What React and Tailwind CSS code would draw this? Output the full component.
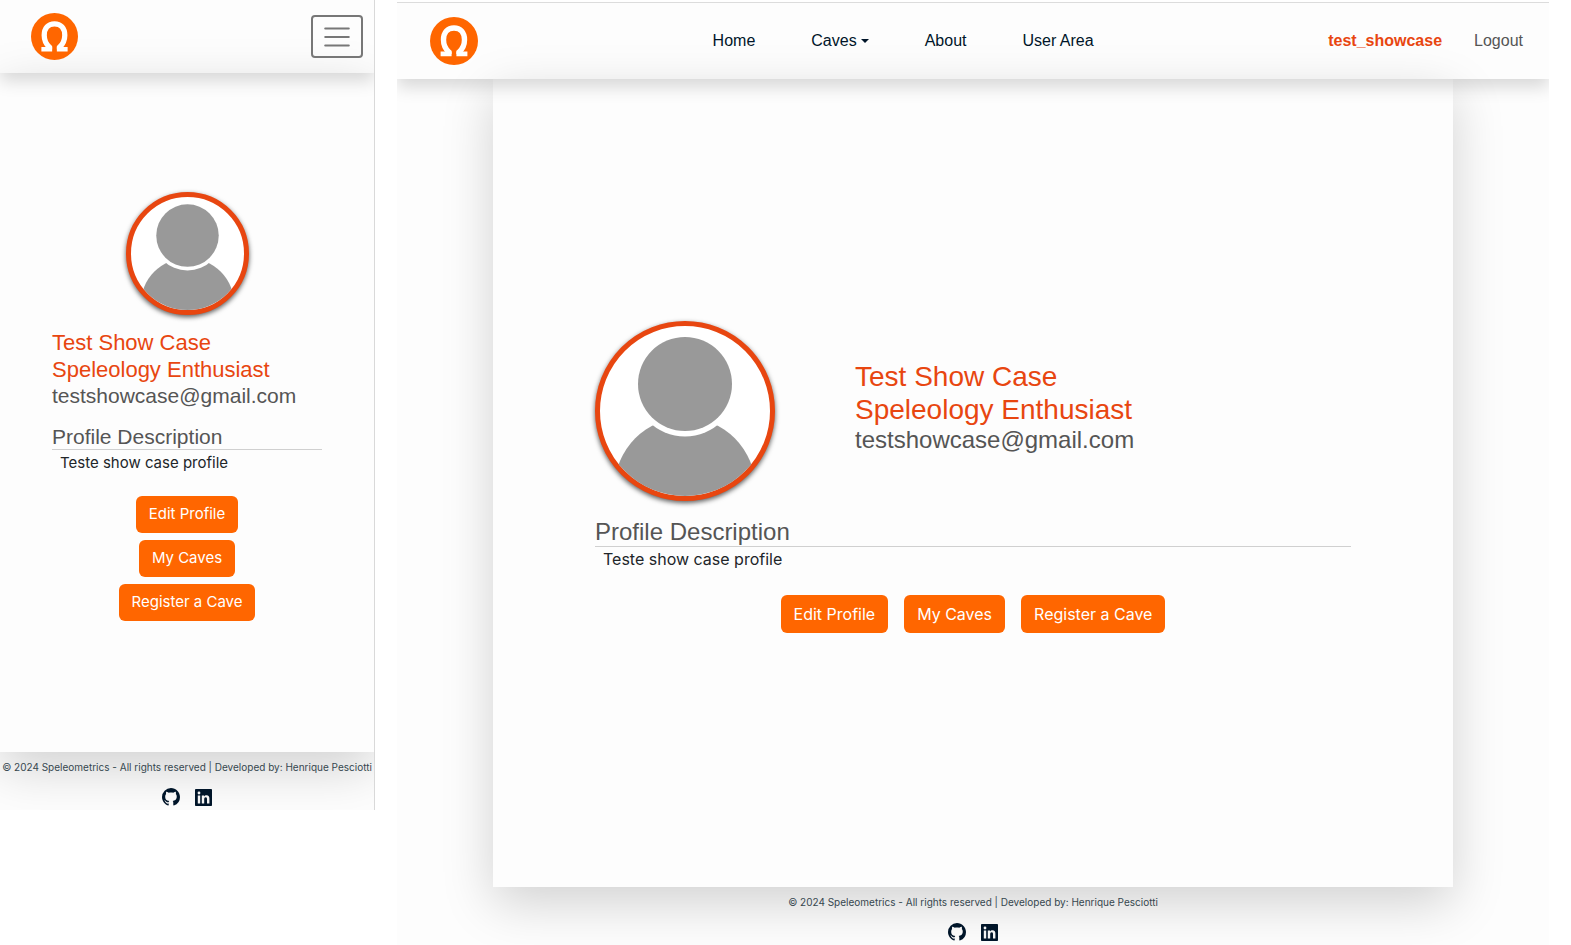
import React from "react";
import { VscGithubInverted } from "react-icons/vsc";

const ARIAL = "font-['Liberation_Sans',Arial,sans-serif]";

function Logo({ className }) {
  return (
    <a href="#home" aria-label="Speleometrics home" className="block shrink-0">
      <svg viewBox="0 0 48 48" className={className} fill="none" aria-hidden="true">
        <circle cx="24" cy="24" r="24" fill="#ff6600" />
        <path
          d="M18.9 37V35C15.4 32 13.5 28 13.5 22.8C13.5 15.4 17.7 11 24 11S34.5 15.4 34.5 22.8C34.5 28 32.6 32 29.1 35V37"
          stroke="#fff"
          strokeWidth="5.4"
        />
        <path d="M10.6 34.6H21.6V39.2H10.6zM26.4 34.6H37.4V39.2H26.4z" fill="#fff" />
      </svg>
    </a>
  );
}

function LinkedinIcon({ className }) {
  return (
    <svg viewBox="0 0 17 17" className={className} fill="none" aria-hidden="true">
      <rect width="17" height="17" rx="0.8" fill="currentColor" />
      <circle cx="4" cy="4" r="1.4" fill="#f5f5f5" />
      <path
        d="M2.8 6.5h2.4v8H2.8zM6.8 6.5h2.3v1.1c.5-.8 1.3-1.3 2.4-1.3 2.2 0 2.9 1.4 2.9 3.5v4.7H12v-4.3c0-1.1-.2-1.9-1.3-1.9S9.2 9.200 9.200 10.200v4.300H6.800z"
        fill="#f5f5f5"
      />
    </svg>
  );
}

function Avatar({ className }) {
  return (
    <div
      className={`shrink-0 overflow-hidden rounded-full border-5 border-[#e84610] bg-white shadow-[0_2px_5px_rgba(0,0,0,0.65)] ${className}`}
    >
      <svg viewBox="0 0 170 170" className="block size-full" role="img" aria-label="Profile picture">
        <circle cx="85" cy="162" r="70.4" fill="#999" />
        <circle cx="85" cy="58" r="52.5" fill="#fff" />
        <circle cx="85" cy="58" r="47" fill="#999" />
      </svg>
    </div>
  );
}

function ActionButton({ className, children }) {
  return (
    <button type="button" className={`rounded-md bg-[#ff6600] px-[13px] text-white ${className}`}>
      {children}
    </button>
  );
}

function Footer() {
  return (
    <footer className="relative flex h-[58px] flex-col items-center">
      <p className="mt-[5px] text-[10px] leading-5 whitespace-nowrap text-[#36474f]">
        © 2024 Speleometrics - All rights reserved | Developed by: Henrique Pesciotti
      </p>
      <div className="mt-[11px] flex items-center gap-[15px] text-[#001529]">
        <a href="#github" aria-label="GitHub">
          <VscGithubInverted className="size-[18px]" />
        </a>
        <a href="#linkedin" aria-label="LinkedIn">
          <LinkedinIcon className="size-[17px]" />
        </a>
      </div>
    </footer>
  );
}

const headerShadow = "shadow-[0_8px_16px_rgba(0,0,0,0.15)]";
const cardShadow = "shadow-[0_16px_48px_rgba(0,0,0,0.175)]";

function MobileView() {
  return (
    <section
      aria-label="Mobile layout"
      className="flex min-h-[810px] w-[375px] shrink-0 flex-col overflow-hidden border-r border-[#d9d9d9] bg-[#fdfdfd]"
    >
      <header className={`relative z-10 flex h-[73px] items-center justify-between pr-[11px] pl-[31px] ${headerShadow}`}>
        <Logo className="size-[47px]" />
        <button
          type="button"
          aria-label="Toggle navigation"
          className="flex h-[43px] w-[52px] items-center justify-center rounded border-2 border-[#777]"
        >
          <svg viewBox="0 0 30 30" className="size-8" stroke="#777" strokeWidth="2" strokeLinecap="round" aria-hidden="true">
            <path d="M4 7h22M4 15h22M4 23h22" />
          </svg>
        </button>
      </header>
      <main className={`flex flex-1 flex-col justify-center bg-[#fdfdfd] px-[52px] pb-3 ${cardShadow}`}>
        <Avatar className="size-[123px] self-center" />
        <div className={`mt-3.5 ${ARIAL}`}>
          <h1 className="text-[22px] leading-[27px] text-[#e84610]">Test Show Case</h1>
          <h2 className="text-[22px] leading-[27px] text-[#e84610]">Speleology Enthusiast</h2>
          <p className="text-[21px] leading-[26px] text-[#555]">testshowcase@gmail.com</p>
        </div>
        <h3 className={`mt-[15px] border-b border-[#d0d0d0] text-[21px] leading-[25px] text-[#555] ${ARIAL}`}>
          Profile Description
        </h3>
        <p className="px-2 text-[15px] leading-[25px] text-[#212529]">Teste show case profile</p>
        <div className="mt-[21px] flex flex-col items-center gap-[7px]">
          <ActionButton className="h-[37px] text-[15px]">Edit Profile</ActionButton>
          <ActionButton className="h-[37px] text-[15px]">My Caves</ActionButton>
          <ActionButton className="h-[37px] text-[15px]">Register a Cave</ActionButton>
        </div>
      </main>
      <Footer />
    </section>
  );
}

function DesktopView() {
  return (
    <section
      aria-label="Desktop layout"
      className="mx-[22px] mt-0.5 flex min-w-0 flex-1 flex-col overflow-hidden border-t border-[#dcdcdc] bg-[#fdfdfd]"
    >
      <header
        className={`relative z-10 flex h-[76px] items-center justify-between pr-[26px] pl-[33px] text-base ${headerShadow} ${ARIAL}`}
      >
        <Logo className="size-12" />
        <nav aria-label="Main" className="flex items-center gap-14 text-[#001529]">
          <a href="#home">Home</a>
          <button type="button" aria-haspopup="menu" className="flex items-center gap-1">
            Caves
            <span className="border-x-4 border-t-4 border-x-transparent border-t-[#001529]" />
          </button>
          <a href="#about">About</a>
          <a href="#user">User Area</a>
        </nav>
        <div className="flex items-center gap-8">
          <a href="#profile" className="font-bold text-[#e84610]">test_showcase</a>
          <a href="#logout" className="text-[#555]">Logout</a>
        </div>
      </header>
      <main className={`mx-auto flex w-5/6 flex-1 flex-col justify-center bg-[#fdfdfd] px-[102px] pb-3 ${cardShadow}`}>
        <div className="flex items-center gap-20">
          <Avatar className="size-[180px]" />
          <div className={`pb-2 ${ARIAL}`}>
            <h1 className="text-[28px] leading-[33px] text-[#e84610]">Test Show Case</h1>
            <h2 className="text-[28px] leading-[33px] text-[#e84610]">Speleology Enthusiast</h2>
            <p className="text-2xl leading-7 text-[#555]">testshowcase@gmail.com</p>
          </div>
        </div>
        <h3 className={`mt-4 border-b border-[#d0d0d0] text-2xl leading-[29px] text-[#555] ${ARIAL}`}>
          Profile Description
        </h3>
        <p className="px-2 text-base leading-6 text-[#212529]">Teste show case profile</p>
        <div className="mt-6 flex justify-center gap-4">
          <ActionButton className="h-[38px] text-base">Edit Profile</ActionButton>
          <ActionButton className="h-[38px] text-base">My Caves</ActionButton>
          <ActionButton className="h-[38px] text-base">Register a Cave</ActionButton>
        </div>
      </main>
      <Footer />
    </section>
  );
}

export default function App() {
  return (
    <div className="flex min-h-screen bg-white font-['Inter',sans-serif]">
      <div className="shrink-0">
        <MobileView />
      </div>
      <DesktopView />
    </div>
  );
}
